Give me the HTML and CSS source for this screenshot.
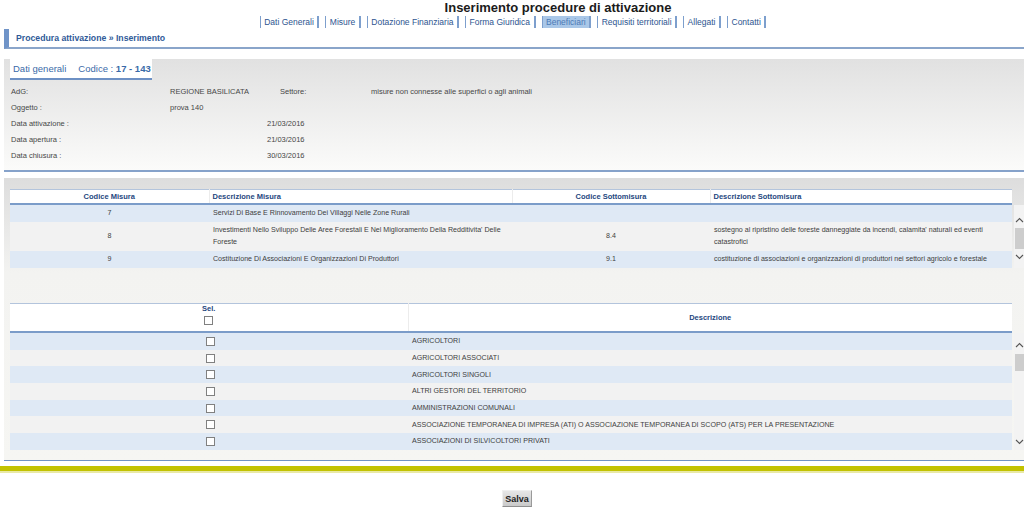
FILE: index.html
```html
<!DOCTYPE html>
<html lang="it">
<head>
<meta charset="utf-8">
<title>Inserimento procedure di attivazione</title>
<link rel="stylesheet" href="styles.css">
</head>
<body>
<header class="top">
  <h1 class="title">Inserimento procedure di attivazione</h1>
  <nav class="tabs">
    <a class="tab" href="#">Dati Generali</a>
    <a class="tab" href="#">Misure</a>
    <a class="tab" href="#">Dotazione Finanziaria</a>
    <a class="tab" href="#">Forma Giuridica</a>
    <a class="tab active" href="#">Beneficiari</a>
    <a class="tab" href="#">Requisiti territoriali</a>
    <a class="tab" href="#">Allegati</a>
    <a class="tab" href="#">Contatti</a>
  </nav>
  <div class="crumb">Procedura attivazione » Inserimento</div>
</header>

<main class="content">
  <section class="general">
    <div class="general-tab"><span>Dati generali</span><span>Codice : <b>17 - 143</b></span></div>
    <div class="general-grid">
      <span>AdG:</span><span>REGIONE BASILICATA</span><span class="settore">Settore:</span><span>misure non connesse alle superfici o agli animali</span>
      <span>Oggetto :</span><span>prova 140</span><span></span><span></span>
      <span>Data attivazione :</span><span></span><span>21/03/2016</span><span></span>
      <span>Data apertura :</span><span></span><span>21/03/2016</span><span></span>
      <span>Data chiusura :</span><span></span><span>30/03/2016</span><span></span>
    </div>
  </section>

  <section class="lists">
    <div class="block">
      <table class="grid head">
        <colgroup><col class="c199"><col class="c303"><col class="c198"><col class="c302"></colgroup>
        <tr>
          <th class="center">Codice Misura</th>
          <th class="left">Descrizione Misura</th>
          <th class="center">Codice Sottomisura</th>
          <th class="left">Descrizione Sottomisura</th>
        </tr>
      </table>
      <div class="body-row">
        <table class="grid body">
          <colgroup><col class="c199"><col class="c303"><col class="c198"><col class="c302"></colgroup>
          <tr class="odd">
            <td class="center">7</td>
            <td class="left">Servizi Di Base E Rinnovamento Dei Villaggi Nelle Zone Rurali</td>
            <td class="center"></td>
            <td class="left"></td>
          </tr>
          <tr class="even">
            <td class="center">8</td>
            <td class="left">Investimenti Nello Sviluppo Delle Aree Forestali E Nel Miglioramento Della Redditivita' Delle Foreste</td>
            <td class="center">8.4</td>
            <td class="left">sostegno al ripristino delle foreste danneggiate da incendi, calamita' naturali ed eventi catastrofici</td>
          </tr>
          <tr class="odd">
            <td class="center">9</td>
            <td class="left">Costituzione Di Associazioni E Organizzazioni Di Produttori</td>
            <td class="center">9.1</td>
            <td class="left">costituzione di associazioni e organizzazioni di produttori nei settori agricolo e forestale</td>
          </tr>
        </table>
        <div class="vscroll vscroll-sm">
          <svg class="arrow" viewBox="0 0 9 6" width="9" height="6"><polyline points="1,5 4.5,1.5 8,5"/></svg>
          <div class="thumb"></div>
          <div class="spacer"></div>
          <svg class="arrow" viewBox="0 0 9 6" width="9" height="6"><polyline points="1,1 4.5,4.5 8,1"/></svg>
        </div>
      </div>
    </div>

    <div class="block block-2">
      <table class="grid head head-2">
        <colgroup><col class="c398"><col class="c604"></colgroup>
        <tr>
          <th class="center sel">Sel.<input type="checkbox" class="chk"></th>
          <th class="center desc">Descrizione</th>
        </tr>
      </table>
      <div class="body-row">
        <table class="grid body body-2">
          <colgroup><col class="c398"><col class="c604"></colgroup>
          <tr class="odd"><td><input type="checkbox" class="chk"></td><td class="left">AGRICOLTORI</td></tr>
          <tr class="even"><td><input type="checkbox" class="chk"></td><td class="left">AGRICOLTORI ASSOCIATI</td></tr>
          <tr class="odd"><td><input type="checkbox" class="chk"></td><td class="left">AGRICOLTORI SINGOLI</td></tr>
          <tr class="even"><td><input type="checkbox" class="chk"></td><td class="left">ALTRI GESTORI DEL TERRITORIO</td></tr>
          <tr class="odd"><td><input type="checkbox" class="chk"></td><td class="left">AMMINISTRAZIONI COMUNALI</td></tr>
          <tr class="even"><td><input type="checkbox" class="chk"></td><td class="left">ASSOCIAZIONE TEMPORANEA DI IMPRESA (ATI) O ASSOCIAZIONE TEMPORANEA DI SCOPO (ATS) PER LA PRESENTAZIONE</td></tr>
          <tr class="odd"><td><input type="checkbox" class="chk"></td><td class="left">ASSOCIAZIONI DI SILVICOLTORI PRIVATI</td></tr>
        </table>
        <div class="vscroll vscroll-lg">
          <svg class="arrow" viewBox="0 0 9 6" width="9" height="6"><polyline points="1,5 4.5,1.5 8,5"/></svg>
          <div class="thumb"></div>
          <div class="spacer"></div>
          <svg class="arrow" viewBox="0 0 9 6" width="9" height="6"><polyline points="1,1 4.5,4.5 8,1"/></svg>
        </div>
      </div>
    </div>
  </section>

  <div class="band"></div>

  <div class="actions">
    <button type="button" class="btn">Salva</button>
  </div>
</main>
</body>
</html>
```

FILE: styles.css
```css
* { box-sizing: border-box; }

body {
  margin: 0;
  width: 1024px;
  font-family: "Liberation Sans", Arial, sans-serif;
  color: #444;
  background: #fff;
}

/* ---------- header ---------- */
.title {
  margin: 0;
  padding-left: 92px;
  text-align: center;
  font-size: 13px;
  line-height: 15px;
  font-weight: bold;
  color: #1b1b1b;
}

.tabs {
  display: flex;
  justify-content: center;
  gap: 6px;
  padding-left: 2px;
  margin-top: 1px;
  height: 12px;
}

.tab {
  display: block;
  height: 12px;
  line-height: 12px;
  padding: 0 3.5px;
  font-size: 8.5px;
  color: #2d5590;
  text-decoration: none;
  border-left: 1px solid #7d9fcd;
  border-right: 2px solid #7d9fcd;
}

.tab.active {
  background: #a9c7e8;
  color: #4d7bb6;
}

.crumb {
  margin: 1px 0 0 4px;
  height: 20px;
  padding-left: 7px;
  border-left: 5px solid #7094c8;
  border-bottom: 2px solid #8aa5ca;
  font-size: 8.7px;
  line-height: 18px;
  font-weight: bold;
  color: #2f5a98;
}

/* ---------- dati generali ---------- */
.general {
  margin: 10px 0 0 4px;
  height: 113px;
  background: linear-gradient(#e1e1e1, #fbfbfa);
  border-bottom: 2px solid #86a2ca;
}

.general-tab {
  margin-left: 6px;
  width: 142px;
  height: 21px;
  display: flex;
  align-items: center;
  gap: 12px;
  padding-left: 3px;
  background: #fff;
  border-bottom: 2px solid #6d90c4;
  font-size: 9.5px;
  color: #3a6aa8;
}

.general-grid {
  display: grid;
  grid-template-columns: 159px 97px 104px 1fr;
  grid-auto-rows: 16px;
  padding: 4px 0 0 7px;
  font-size: 7.5px;
  line-height: 16px;
  color: #474747;
}

.settore { padding-left: 13px; }

/* ---------- lists ---------- */
.lists {
  margin: 6px 0 0 4px;
  padding: 11px 0 10px 6px;
  background: linear-gradient(#dddddd 0, #f3f3f1 95px, #f6f6f3 100%);
  border-bottom: 1px solid #7093c4;
}

.block-2 { margin-top: 35px; }

.grid {
  width: 1002px;
  border-collapse: collapse;
  table-layout: fixed;
  font-size: 7.1px;
}

.c199 { width: 199px; }
.c303 { width: 303px; }
.c198 { width: 198px; }
.c302 { width: 302px; }
.c398 { width: 398px; }
.c604 { width: 604px; }

.head {
  background: #fff;
  border-top: 1px solid #b3c4dc;
  border-bottom: 2px solid #7b9cc9;
}

.head th {
  height: 14px;
  padding: 0 3px;
  font-size: 7.5px;
  font-weight: bold;
  color: #25477e;
  border-left: 1px solid #ececec;
}

.head th:first-child { border-left: 0; }

.head-2 th { height: 29px; }

.sel { padding-top: 6px; line-height: 9px; vertical-align: top; }
.sel .chk { display: block; margin: 3px auto 0; }

.center { text-align: center; }
.left { text-align: left; }

.body-row {
  display: flex;
  align-items: stretch;
}

.body td {
  padding: 2.5px 1px 2.5px 4px;
  line-height: 12px;
  color: #3e3e3e;
  vertical-align: middle;
}

.body td.center { padding-right: 4px; }

.body-2 td { padding-top: 2.35px; padding-bottom: 2.35px; }
.body-2 td:first-child { text-align: center; }
.body-2 td.left { padding-left: 4px; }

.odd { background: #dfe9f5; }
.even { background: #f2f2f2; }

.chk {
  -webkit-appearance: none;
  appearance: none;
  display: inline-block;
  width: 9px;
  height: 9px;
  margin: 0;
  vertical-align: middle;
  border: 1px solid #808080;
  background: #fff;
  border-radius: 0;
}

/* scrollbars */
.vscroll {
  width: 10px;
  margin-left: 2px;
  display: flex;
  flex-direction: column;
  align-items: center;
  background: #f3f3f3;
}

.vscroll .arrow {
  flex: none;
  margin: 3px 0;
  fill: none;
  stroke: #555;
  stroke-width: 1.1;
}

.vscroll .thumb {
  flex: none;
  width: 9px;
  margin-left: 1px;
  background: #cdcdcd;
}

.vscroll .spacer { flex: 1; }

.vscroll-sm { padding: 9px 0 5px; }
.vscroll-sm .thumb { height: 21px; margin-top: 2px; }

.vscroll-lg { padding: 6px 0 2px; }
.vscroll-lg .thumb { height: 17px; margin-top: 3px; }

/* ---------- footer ---------- */
.band {
  margin-top: 5px;
  height: 7px;
  background: #c2c200;
  border-bottom: 2px solid #e9e9a6;
}

.actions {
  padding: 15px 0 0 10px;
  text-align: center;
}

.btn {
  height: 17px;
  width: 30px;
  padding: 0;
  font-family: "Liberation Sans", Arial, sans-serif;
  font-size: 9px;
  font-weight: bold;
  color: #1d1d1d;
  background: linear-gradient(#e6e6e6, #cacaca);
  border: 1px solid;
  border-color: #efefef #9a9a9a #8f8f8f #efefef;
  border-radius: 0;
}
```
